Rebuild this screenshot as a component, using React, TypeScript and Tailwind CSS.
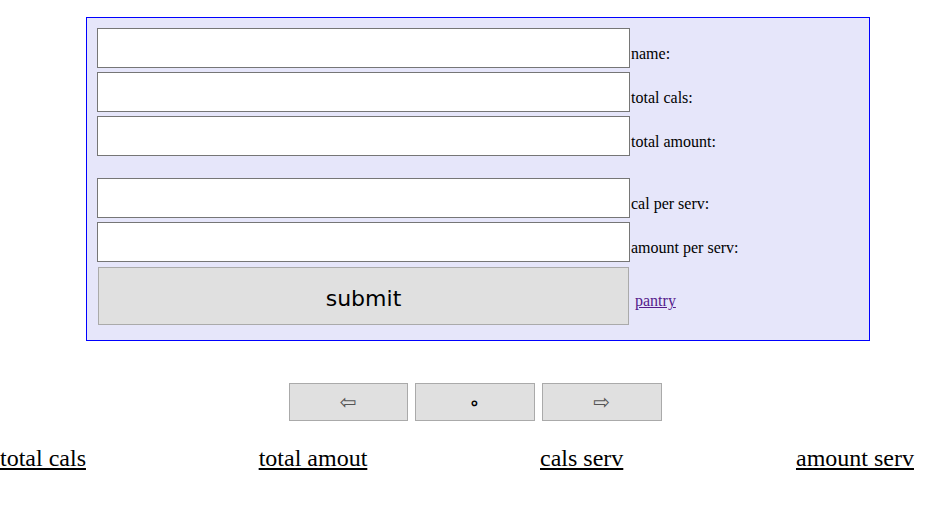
import React from "react";

const fields = [
  { label: "name:" },
  { label: "total cals:" },
  { label: "total amount:", spaceAfter: true },
  { label: "cal per serv:" },
  { label: "amount per serv:" },
];

const columns = ["total cals", "total amout", "cals serv", "amount serv"];

export default function App() {
  return (
    <div className="min-h-[517px] bg-white font-['Liberation_Serif',serif] text-black">
      {/* form box */}
      <div className="pt-[17px] pl-[86px]">
        <div className="w-[784px] border border-[#0000ff] bg-[#e6e6fa] pt-[10px] pb-[15px] pl-[10px]">
          {fields.map((f) => (
            <div key={f.label} className={`flex items-end ${f.spaceAfter ? "mb-[22px]" : "mb-[4px]"}`}>
              <input
                type="text"
                className="h-[40px] w-[533px] border border-[#767676] bg-white outline-none"
              />
              <span className="mb-[5px] ml-[1px] text-[16px] leading-[18px]">{f.label}</span>
            </div>
          ))}
          <div className="flex items-end pt-[1px]">
            <button className="ml-[1px] h-[58px] w-[531px] border border-[#aaaaaa] bg-[#e0e0e0] pt-[4px] font-['DejaVu_Sans',sans-serif] text-[22px] text-black">
              submit
            </button>
            <a href="#" className="mb-[15px] ml-[6px] text-[16px] leading-[18px] text-[#551a8b] underline">
              pantry
            </a>
          </div>
        </div>
      </div>

      {/* nav buttons */}
      <div className="mt-[42px] flex justify-center gap-[7px] pl-[4px]">
        <button className="h-[38px] w-[119px] border border-[#aaaaaa] bg-[#e0e0e0] font-['DejaVu_Sans',sans-serif] text-[20px] text-[#555]">
          ⇦
        </button>
        <button className="h-[38px] w-[120px] border border-[#aaaaaa] bg-[#e0e0e0] font-['DejaVu_Sans',sans-serif] text-[18px] font-bold text-black">
          ∘
        </button>
        <button className="h-[38px] w-[120px] border border-[#aaaaaa] bg-[#e0e0e0] font-['DejaVu_Sans',sans-serif] text-[20px] text-[#555]">
          ⇨
        </button>
      </div>

      {/* column headers */}
      <div className="mt-[23px] flex w-[914px] justify-between">
        {columns.map((c) => (
          <a key={c} href="#" className="text-[24px] leading-[28px] text-black underline">
            {c}
          </a>
        ))}
      </div>
    </div>
  );
}
